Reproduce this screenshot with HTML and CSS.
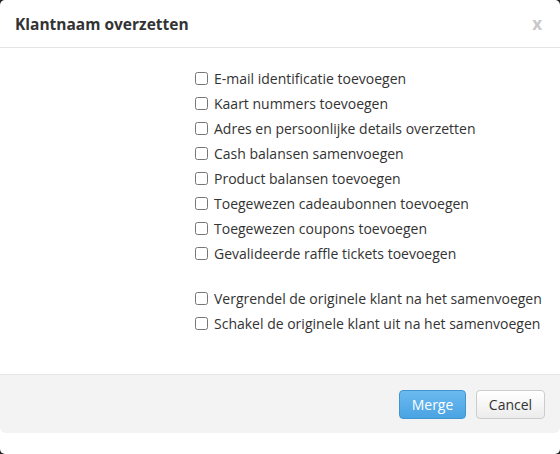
FILE: index.html
```html
<!DOCTYPE html>
<html>
<head>
<meta charset="utf-8">
<link rel="stylesheet" href="styles.css">
</head>
<body>
<div class="modal">
  <div class="modal-header">
    <h3 class="modal-title">Klantnaam overzetten</h3>
    <span class="close">x</span>
  </div>
  <div class="modal-body">
    <div class="group">
      <label class="row"><input type="checkbox"><span>E-mail identificatie toevoegen</span></label>
      <label class="row"><input type="checkbox"><span>Kaart nummers toevoegen</span></label>
      <label class="row"><input type="checkbox"><span>Adres en persoonlijke details overzetten</span></label>
      <label class="row"><input type="checkbox"><span>Cash balansen samenvoegen</span></label>
      <label class="row"><input type="checkbox"><span>Product balansen toevoegen</span></label>
      <label class="row"><input type="checkbox"><span>Toegewezen cadeaubonnen toevoegen</span></label>
      <label class="row"><input type="checkbox"><span>Toegewezen coupons toevoegen</span></label>
      <label class="row"><input type="checkbox"><span>Gevalideerde raffle tickets toevoegen</span></label>
    </div>
    <div class="group">
      <label class="row"><input type="checkbox"><span>Vergrendel de originele klant na het samenvoegen</span></label>
      <label class="row"><input type="checkbox"><span>Schakel de originele klant uit na het samenvoegen</span></label>
    </div>
  </div>
  <div class="modal-footer">
    <button class="btn btn-primary">Merge</button>
    <button class="btn btn-default">Cancel</button>
  </div>
</div>
</body>
</html>
```
FILE: styles.css
```css
html, body {
  margin: 0;
  padding: 0;
  background: #222;
}
body {
  font-family: "Open Sans", "Liberation Sans", sans-serif;
  color: #333;
}
.modal {
  width: 560px;
  height: 454px;
  background: #fff;
  border-radius: 5px;
  display: flex;
  flex-direction: column;
  overflow: hidden;
}
.modal-header {
  height: 47px;
  border-bottom: 1px solid #e5e5e5;
  display: flex;
  align-items: center;
  justify-content: space-between;
  padding: 0 18px 0 15px;
}
.modal-title {
  margin: 0;
  font-size: 15.5px;
  font-weight: 700;
  color: #333;
}
.close {
  font-size: 17px;
  font-weight: 700;
  color: #c8c8c8;
  line-height: 1;
  margin-top: -1px;
}
.modal-body {
  padding: 18px 0 38px 194px;
  display: flex;
  flex-direction: column;
  gap: 20px;
}
.group {
  display: flex;
  flex-direction: column;
}
.row {
  height: 25px;
  display: flex;
  align-items: center;
  font-size: 14px;
  color: #333;
}
.row input {
  width: 13px;
  height: 13px;
  margin: 0 6px 0 1px;
}
.modal-footer {
  height: 58px;
  border-top: 1px solid #e5e5e5;
  background: #f3f3f3;
  border-radius: 0 0 6px 6px;
  display: flex;
  align-items: center;
  justify-content: flex-end;
  gap: 10px;
  padding: 0 15px;
}
.btn {
  font-family: "Open Sans", "Liberation Sans", sans-serif;
  font-size: 14px;
  height: 29px;
  border-radius: 4px;
  padding: 0 11px;
  cursor: pointer;
}
.btn-primary {
  width: 67px;
  color: #fff;
  background: linear-gradient(#6bbaf0, #4aa3e2);
  border: 1px solid #3f95d2;
}
.btn-default {
  width: 69px;
  color: #333;
  background: linear-gradient(#fff, #ececec);
  border: 1px solid #ccc;
}
```
